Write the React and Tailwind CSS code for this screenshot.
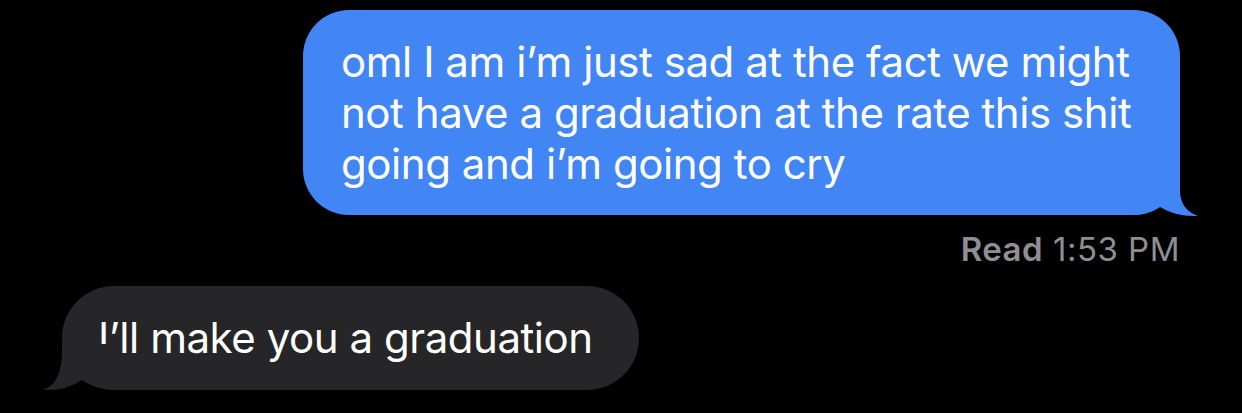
export default function App() {
  return (
    <div className="min-h-[413px] w-[1242px] bg-black font-['Inter','Helvetica',sans-serif] text-white antialiased">
      <div className="flex flex-col items-end pr-[62px] pt-[10px]">
        {/* sent bubble */}
        <div className="relative w-[877px] rounded-[46px] bg-[#4186f4] pb-[26px] pl-[38px] pt-[26px] text-[42px] leading-[51px] tracking-[-0.45px]">
          oml I am i’m just sad at the fact we might
          <br />
          not have a graduation at the rate this shit
          <br />
          going and i’m going to cry
          <svg
            className="absolute bottom-[-2px] right-[-20px]"
            width="70"
            height="47"
            viewBox="0 0 70 47"
          >
            <path
              d="M0 0 H50 V22 Q51 40 68 46 Q46 47 30 37 Q18 45 0 45 Z"
              fill="#4186f4"
            />
          </svg>
        </div>

        <div className="mt-[16px] text-[33px] leading-[36px] tracking-[0.5px] text-[#8e8e93]">
          <span className="font-semibold">Read</span> 1:53 PM
        </div>
      </div>

      <div className="flex pl-[62px] pt-[19px]">
        {/* received bubble */}
        <div className="relative rounded-[52px] bg-[#262628] pb-[27px] pl-[36px] pr-[46px] pt-[26px] text-[42px] leading-[51px] tracking-[-0.45px]">
          I’ll make you a graduation
          <svg
            className="absolute bottom-[-1px] left-[-20px]"
            width="70"
            height="47"
            viewBox="0 0 70 47"
          >
            <path
              d="M70 0 H20 V10 Q19 40 1 46 Q24 47 40 36 Q52 45 70 45 Z"
              fill="#262628"
            />
          </svg>
        </div>
      </div>
    </div>
  );
}
